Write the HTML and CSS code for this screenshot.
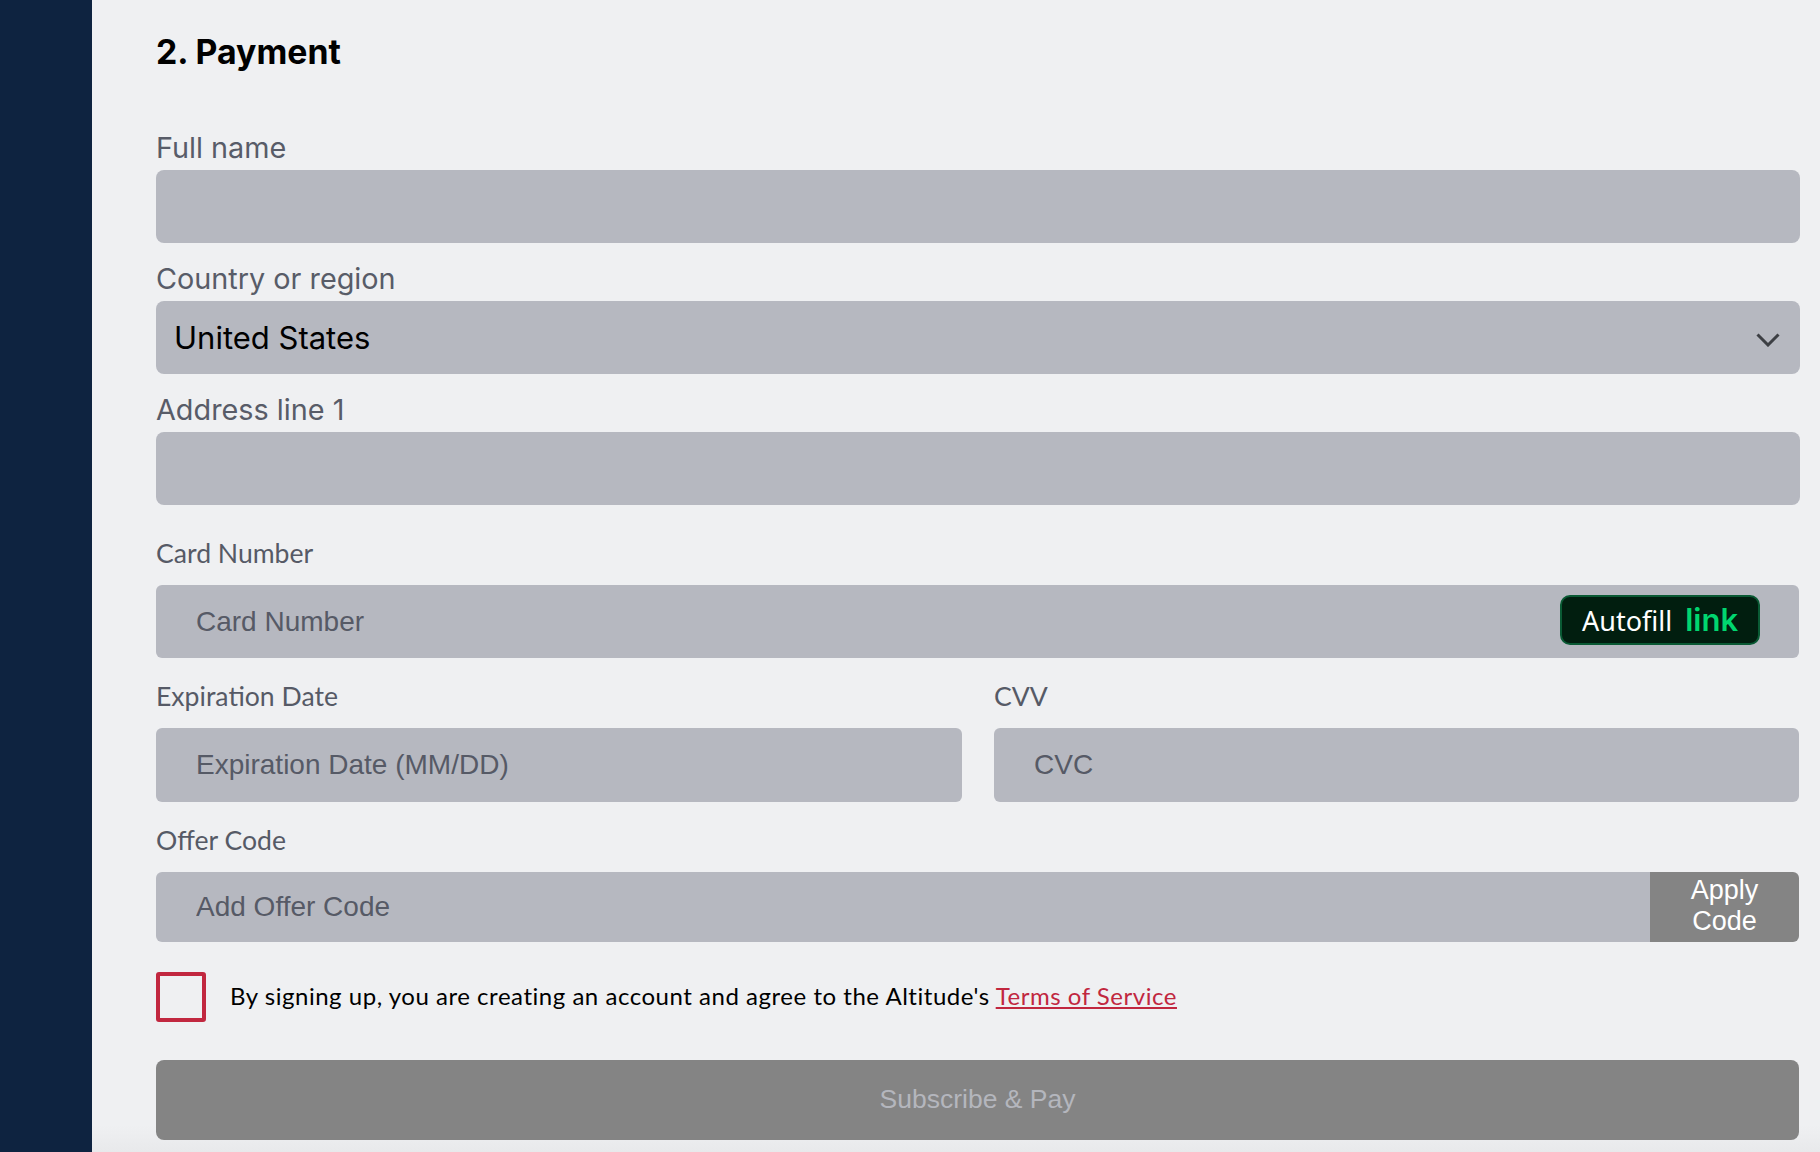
FILE: index.html
```html
<!DOCTYPE html>
<html lang="en">
<head>
  <meta charset="UTF-8" />
  <meta name="viewport" content="width=device-width, initial-scale=1.0" />
  <title>Payment - Altitude</title>
  <link rel="stylesheet" href="styles.css">
</head>
<body>
  <div class="layout">
    <div class="sidebar"></div>
    <form class="payment-form">
      <h2>2. Payment</h2>

      <div class="address-group">
        <label class="address-label">Full name</label>
        <input type="text" class="address-input">
      </div>
      <div class="address-group">
        <label class="address-label">Country or region</label>
        <div class="select-wrap">
          <select class="address-input">
            <option>United States</option>
          </select>
          <svg class="chevron" width="24" height="14" viewBox="0 0 24 14" fill="none">
            <path d="M1.5 1.5 12 12 22.5 1.5" stroke="#3d3f44" stroke-width="3" />
          </svg>
        </div>
      </div>
      <div class="address-group">
        <label class="address-label">Address line 1</label>
        <input type="text" class="address-input">
      </div>

      <div class="card-group card-number">
        <label class="card-label">Card Number</label>
        <div class="card-wrap">
          <input type="text" class="card-input" placeholder="Card Number">
          <button type="button" class="autofill-btn">Autofill <span class="link-word">link</span></button>
        </div>
      </div>

      <div class="card-row">
        <div class="card-group">
          <label class="card-label">Expiration Date</label>
          <input type="text" class="card-input tall" placeholder="Expiration Date (MM/DD)">
        </div>
        <div class="card-group">
          <label class="card-label">CVV</label>
          <input type="text" class="card-input tall" placeholder="CVC">
        </div>
      </div>

      <div class="card-group">
        <label class="card-label">Offer Code</label>
        <div class="offer-wrap">
          <input type="text" class="offer-input" placeholder="Add Offer Code">
          <button type="button" class="apply-btn">Apply Code</button>
        </div>
      </div>

      <div class="terms">
        <span class="checkbox"></span>
        <p>By signing up, you are creating an account and agree to the Altitude's <a href="#">Terms of Service</a></p>
      </div>

      <button type="submit" class="submit-btn" disabled>Subscribe &amp; Pay</button>
    </form>
  </div>
</body>
</html>
```

FILE: styles.css
```css
* {
  margin: 0;
  padding: 0;
  box-sizing: border-box;
}
body {
  background: linear-gradient(#eff0f2 1125px, #e8e9eb 1152px);
  height: 1152px;
  overflow: hidden;
  font-family: 'Inter', sans-serif;
}
.layout {
  display: flex;
  height: 100%;
}
.sidebar {
  width: 92px;
  background: #0e2340;
}
.payment-form {
  width: 1708px;
  padding-left: 64px;
}
h2 {
  height: 112px;
  padding-top: 31px;
  font-size: 33.8px;
  line-height: 42px;
  font-weight: 700;
  color: #000;
}
.address-label {
  display: block;
  height: 58px;
  padding-top: 15px;
  font-size: 28.8px;
  line-height: 42px;
  color: #585c68;
}
.address-input {
  display: block;
  width: 100%;
  height: 73px;
  padding: 0 18px;
  background: #b6b8c0;
  border: none;
  border-radius: 8px;
  outline: none;
  appearance: none;
  font-family: 'Inter', sans-serif;
  font-size: 31px;
  color: #000;
}
.select-wrap {
  position: relative;
}
.chevron {
  position: absolute;
  top: 32px;
  right: 20px;
}
.card-label {
  display: block;
  height: 70px;
  padding-top: 21px;
  font-family: 'Lato', sans-serif;
  font-size: 26.6px;
  line-height: 34px;
  color: #565a66;
}
.card-number .card-label {
  height: 80px;
  padding-top: 31px;
}
.card-wrap {
  position: relative;
}
.card-input {
  display: block;
  width: 100%;
  height: 73px;
  padding: 0 40px;
  background: #b6b8c0;
  border: none;
  border-radius: 6px;
  outline: none;
  font-family: 'Liberation Sans', sans-serif;
  font-size: 28px;
  color: #565a66;
}
.card-input.tall {
  height: 74px;
}
.card-input::placeholder, .offer-input::placeholder {
  color: #565a66;
  opacity: 1;
}
.autofill-btn {
  position: absolute;
  top: 10px;
  right: 39px;
  width: 200px;
  height: 50px;
  background: #011e0f;
  border: 2px solid #0a5a34;
  border-radius: 10px;
  font-family: 'Noto Sans', sans-serif;
  font-size: 27px;
  color: #fff;
}
.link-word {
  margin-left: 6px;
  font-family: 'Inter', sans-serif;
  font-size: 31px;
  font-weight: 600;
  color: #00d66f;
}
.card-row {
  display: grid;
  grid-template-columns: 806px 805px;
  gap: 32px;
  width: 1643px;
}
.card-number, .offer-wrap {
  width: 1643px;
}
.offer-wrap {
  display: flex;
  height: 70px;
  border-radius: 6px;
  overflow: hidden;
}
.offer-input {
  flex: 1;
  padding: 0 40px;
  background: #b6b8c0;
  border: none;
  outline: none;
  font-family: 'Liberation Sans', sans-serif;
  font-size: 28px;
}
.apply-btn {
  width: 149px;
  padding: 0 36px 2px;
  background: #848484;
  border: none;
  font-family: 'Liberation Sans', sans-serif;
  font-size: 27px;
  line-height: 31px;
  color: #fff;
}
.terms {
  display: flex;
  align-items: center;
  gap: 24px;
  margin-top: 30px;
}
.checkbox {
  width: 50px;
  height: 50px;
  border: 4px solid #c1273f;
  border-radius: 3px;
}
.terms p {
  padding-bottom: 4px;
  font-family: 'Lato', sans-serif;
  font-size: 24px;
  letter-spacing: 0.53px;
  color: #000;
}
.terms a {
  color: #c1273f;
}
.submit-btn {
  display: block;
  width: 1643px;
  height: 80px;
  margin-top: 38px;
  padding-bottom: 2px;
  background: #848484;
  border: none;
  border-radius: 8px;
  font-family: 'Liberation Sans', sans-serif;
  font-size: 26.5px;
  color: #b4b6bd;
}
```
